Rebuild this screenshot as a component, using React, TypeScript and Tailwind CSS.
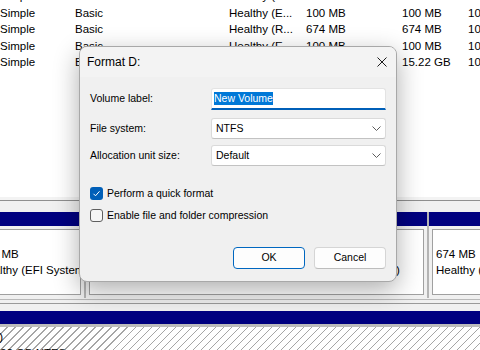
const volumes = [
  ['Simple', 'Basic', 'Healthy (B...', '15.22 GB', '15.22 GB', '10'],
  ['Simple', 'Basic', 'Healthy (E...', '100 MB', '100 MB', '10'],
  ['Simple', 'Basic', 'Healthy (R...', '674 MB', '674 MB', '10'],
  ['Simple', 'Basic', 'Healthy (E...', '100 MB', '100 MB', '10'],
  ['Simple', 'Basic', 'Healthy (B...', '236.44 GB', '15.22 GB', '10'],
];

function VolumeList() {
  return (
    <div className="h-[197px] overflow-hidden bg-white text-[11.5px]">
      <div className="mt-[-12px]">
        {volumes.map((row, i) => (
          <div
            key={i}
            className="grid h-[16.6px] grid-cols-[75px_154px_77px_96px_66px_1fr] items-center leading-[16.6px] whitespace-nowrap"
          >
            {row.map((cell, j) => (
              <span key={j} className="overflow-hidden">
                {cell}
              </span>
            ))}
          </div>
        ))}
      </div>
    </div>
  );
}

function Partition({ width, lines }: { width: string; lines: string[] }) {
  return (
    <div className={`${width} shrink-0 flex flex-col`}>
      <div className="h-[14px] bg-[#000080]" />
      <div className="h-[72px] bg-[#f0f0f0] p-[3px]">
        <div className="h-full overflow-hidden border border-[#a0a0a0] bg-white pl-[3px] text-[11.5px] leading-[16px] whitespace-nowrap">
          {lines.map((l, i) => (
            <div key={i} className="h-[16px]">
              {l}
            </div>
          ))}
        </div>
      </div>
    </div>
  );
}

function DiskMap() {
  return (
    <div>
      <div className="h-[3px] bg-[#f3f3f3]" />
      <div className="h-[1px] bg-[#8e8e8e]" />
      <div className="h-[11px] bg-[#f0f0f0]" />
      <div className="flex gap-[2px] bg-[#b4b4b4] ml-[-28px]">
        <Partition width="w-[112px]" lines={['', '100 MB', 'Healthy (EFI System Partition)']} />
        <Partition
          width="w-[341px]"
          lines={['(C:)', '236.44 GB NTFS', 'Healthy (Boot, Page File, Crash Dump, Basic Data Partition)']}
        />
        <Partition width="w-[120px]" lines={['', '674 MB', 'Healthy (Recovery Partition)']} />
      </div>
      <div className="h-[1px] bg-[#f0f0f0]" />
      <div className="h-[1px] bg-[#b9b9b9]" />
      <div className="h-[3px] bg-[#f0f0f0]" />
      <div className="h-[1px] bg-[#9a9a9a]" />
      <div className="h-[7px] bg-[#f0f0f0]" />
      <div className="h-[13px] bg-[#000080]" />
      <div className="h-[3px] bg-[#bcbcbc]" />
      <div className="h-[40px] bg-[image:repeating-linear-gradient(135deg,#ffffff_0px,#ffffff_4.9px,#a6a6a6_4.9px,#a6a6a6_5.66px)] pt-[2px] text-[11.5px] leading-[16px] whitespace-nowrap">
        <div className="ml-[-16px]">
          <div>(D:)</div>
          <div>15.22 GB NTFS</div>
        </div>
      </div>
    </div>
  );
}

function Chevron() {
  return (
    <svg width="9" height="5" viewBox="0 0 9 5" className="mr-[4px]">
      <polyline points="0.5,0.5 4.5,4.5 8.5,0.5" fill="none" stroke="#5c5c5c" strokeWidth="1" />
    </svg>
  );
}

function Select({ value }: { value: string }) {
  return (
    <div className="flex h-[21px] w-[175px] items-center justify-between rounded-[3px] border border-[#dadada] border-b-[#c2c2c2] bg-white pl-[4px]">
      <span>{value}</span>
      <Chevron />
    </div>
  );
}

function FormatDialog() {
  return (
    <div className="absolute left-[79px] top-[46px] flex h-[236px] w-[318px] flex-col overflow-hidden rounded-[8px] border border-[#a8a8a8] bg-[#f0f0f0] shadow-[0_8px_26px_rgba(0,0,0,0.32)] text-[10.5px]">
      <div className="flex h-[30px] items-center justify-between bg-[#f3f3f3] pl-[7px] pr-[9px] text-[12px]">
        <span>Format D:</span>
        <svg width="10" height="10" viewBox="0 0 10 10">
          <path d="M0.5 0.5 L9.5 9.5 M9.5 0.5 L0.5 9.5" stroke="#1b1b1b" strokeWidth="1" />
        </svg>
      </div>
      <div className="flex flex-1 flex-col px-[10px]">
        <div className="mt-[11px] grid grid-cols-[121px_175px] items-center">
          <span>Volume label:</span>
          <div className="flex h-[22px] items-center rounded-t-[3px] border border-[#e3e3e3] border-b-2 border-b-[#005fb8] bg-white pl-[2px]">
            <span className="bg-[#0078d7] leading-[13px] text-white">New Volume</span>
          </div>
        </div>
        <div className="mt-[8px] grid grid-cols-[121px_175px] items-center">
          <span>File system:</span>
          <Select value="NTFS" />
        </div>
        <div className="mt-[6px] grid grid-cols-[121px_175px] items-center">
          <span>Allocation unit size:</span>
          <Select value="Default" />
        </div>
        <label className="mt-[21px] flex h-[13px] items-center gap-[4px]">
          <span className="flex h-[13px] w-[13px] items-center justify-center rounded-[3px] bg-[#005fb8]">
            <svg width="9" height="9" viewBox="0 0 9 9">
              <polyline points="1.5,4.8 3.5,6.8 7.5,2.3" fill="none" stroke="#ffffff" strokeWidth="1" />
            </svg>
          </span>
          <span>Perform a quick format</span>
        </label>
        <label className="mt-[9px] flex h-[13px] items-center gap-[4px]">
          <span className="h-[13px] w-[13px] rounded-[3px] border border-[#5f5f5f] bg-[#f6f6f6]" />
          <span>Enable file and folder compression</span>
        </label>
        <div className="mt-[25px] flex justify-end gap-[9px]">
          <button className="h-[22px] w-[72px] rounded-[4px] border border-[#0067c0] bg-[#fdfdfd]">OK</button>
          <button className="h-[22px] w-[72px] rounded-[4px] border border-[#d5d5d5] border-b-[#bdbdbd] bg-[#fdfdfd]">
            Cancel
          </button>
        </div>
      </div>
    </div>
  );
}

export default function App() {
  return (
    <div className="relative h-[350px] w-[480px] overflow-hidden bg-white font-['Liberation_Sans',Arial,sans-serif] text-black">
      <VolumeList />
      <DiskMap />
      <FormatDialog />
    </div>
  );
}
